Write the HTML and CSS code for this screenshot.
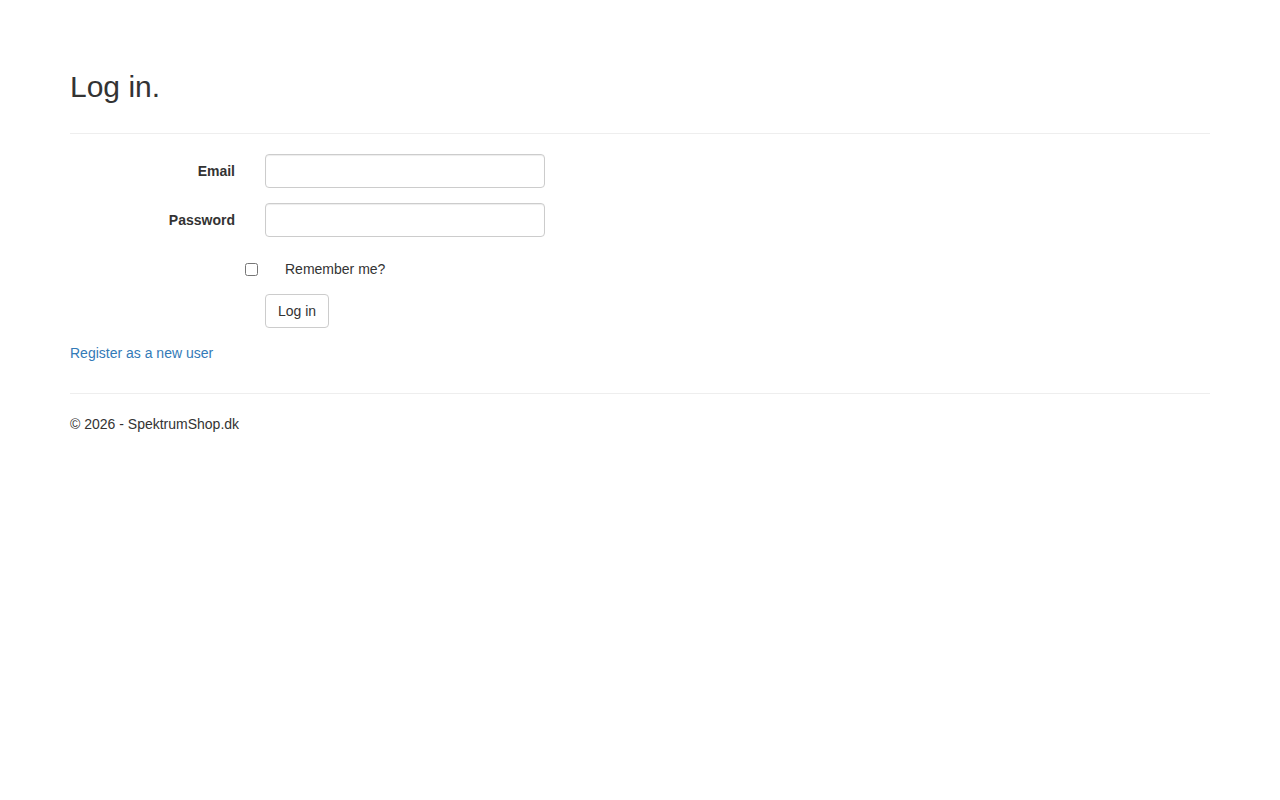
FILE: index.html
```html
<!DOCTYPE html>
<html lang="en">
<head>
    <meta charset="UTF-8">
    <meta name="viewport" content="width=device-width, initial-scale=1.0">
    <title>Log in - SpektrumShop.dk</title>
    <link rel="stylesheet" href="styles.css">
</head>
<body>
    <div class="container body-content">
        <h2>Log in.</h2>
        <section id="loginForm">
            <form class="form-horizontal">
                <hr>
                <div class="form-group">
                    <label class="control-label" for="Email">Email</label>
                    <div class="field">
                        <input type="text" id="Email" class="form-control">
                    </div>
                </div>
                <div class="form-group">
                    <label class="control-label" for="Password">Password</label>
                    <div class="field">
                        <input type="password" id="Password" class="form-control">
                    </div>
                </div>
                <div class="form-group">
                    <div class="field offset">
                        <div class="checkbox">
                            <input type="checkbox" id="RememberMe">
                            <label for="RememberMe">Remember me?</label>
                        </div>
                    </div>
                </div>
                <div class="form-group">
                    <div class="field offset">
                        <button type="submit" class="btn">Log in</button>
                    </div>
                </div>
                <p>
                    <a href="#">Register as a new user</a>
                </p>
            </form>
        </section>
        <hr>
        <footer>
            <p>&copy; 2026 - SpektrumShop.dk</p>
        </footer>
    </div>
</body>
</html>
```

FILE: styles.css
```css
* {
    box-sizing: border-box;
}
body {
    font-family: "Liberation Sans", Arial, sans-serif;
    font-size: 14px;
    line-height: 20px;
    color: #333;
    background-color: #fff;
    margin: 0;
    padding-top: 50px;
}
.container {
    width: 1170px;
    margin: 0 auto;
    padding: 0 15px;
}
h2 {
    font-size: 30px;
    font-weight: 500;
    line-height: 1.1;
    margin: 20px 0 10px;
}
hr {
    margin: 20px 0;
    border: 0;
    border-top: 1px solid #eee;
}
p {
    margin: 0 0 10px;
}
a {
    color: #337ab7;
    text-decoration: none;
}
#loginForm {
    display: flow-root;
}
.form-group {
    display: grid;
    grid-template-columns: 195px 1fr;
    margin: 0 -15px 15px;
}
.control-label {
    font-weight: bold;
    text-align: right;
    padding: 7px 15px 0;
}
.field {
    padding: 0 15px;
}
.field.offset {
    grid-column: 2;
}
.form-control {
    display: block;
    width: 100%;
    max-width: 280px;
    height: 34px;
    padding: 6px 12px;
    font-family: inherit;
    font-size: 14px;
    color: #555;
    background-color: #fff;
    border: 1px solid #ccc;
    border-radius: 4px;
    box-shadow: inset 0 1px 1px rgba(0, 0, 0, 0.075);
}
.checkbox {
    position: relative;
    padding-top: 7px;
    min-height: 27px;
}
.checkbox input {
    position: absolute;
    margin: 4px 0 0 -20px;
}
.checkbox label {
    padding-left: 20px;
}
.btn {
    display: inline-block;
    height: 34px;
    padding: 6px 12px;
    font-family: inherit;
    font-size: 14px;
    line-height: 20px;
    color: #333;
    background-color: #fff;
    border: 1px solid #ccc;
    border-radius: 4px;
    cursor: pointer;
}
```
